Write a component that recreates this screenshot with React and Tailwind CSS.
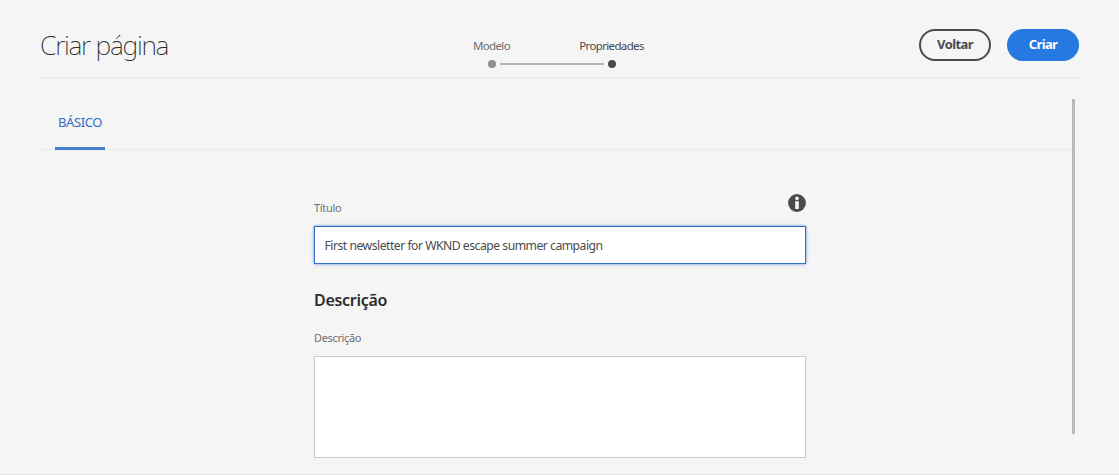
function Step({ label, active, children }) {
  return (
    <div className={`flex w-[120px] flex-col items-center ${active ? "text-[#4b4b4b]" : "text-[#6e6e6e]"}`}>
      <span className="-ml-px flex h-4 items-center whitespace-nowrap text-[11.5px] tracking-[-0.65px]">{label}</span>
      <div className="relative mt-1.5 flex w-full justify-center">
        <span className={`size-2 rounded-full ${active ? "bg-[#4b4b4b]" : "bg-[#8e8e8e]"}`} />
        {children}
      </div>
    </div>
  );
}

function Header() {
  return (
    <header className="mx-10 flex h-[79px] shrink-0 justify-between border-b-2 border-[#eaeaea]">
      <div className="w-[392px] pt-[27px]">
        <h1 className="whitespace-nowrap text-[26.5px] font-extralight leading-9 tracking-[-1.25px] text-[#2c2c2c]">
          Criar página
        </h1>
      </div>
      <div className="flex w-[240px] pt-[38px]">
        <Step label="Modelo">
          <span className="absolute left-[68px] top-[3px] h-0.5 w-[104px] bg-[#b3b3b3]" />
        </Step>
        <Step label="Propriedades" active />
      </div>
      <div className="flex w-[407px] justify-end gap-4 pt-[29px] text-[13px] font-bold tracking-[-0.6px]">
        <button className="h-8 w-[72px] rounded-full border-2 border-[#4b4b4b] text-[#4b4b4b]">Voltar</button>
        <button className="h-8 w-[72px] rounded-full bg-[#2679e0] text-white">Criar</button>
      </div>
    </header>
  );
}

function InfoIcon() {
  return (
    <svg width="18" height="18" viewBox="0 0 18 18" aria-hidden="true">
      <circle cx="9" cy="9" r="8.9" fill="#4b4b4b" />
      <circle cx="9" cy="4.4" r="1.8" fill="#f5f5f5" />
      <path d="M7.2 7.2h3.6v7.8H7.2z" fill="#f5f5f5" />
    </svg>
  );
}

export default function App() {
  return (
    <div className="flex h-[475px] w-[1119px] flex-col overflow-hidden border-b border-[#e6e6e6] bg-[#f5f5f5] font-['Noto_Sans','Open_Sans',sans-serif]">
      <Header />
      <main className="relative mx-10 flex-1">
        <nav className="flex h-[71px] items-end border-b border-[#eaeaea] pl-[15px]">
          <button className="-mb-px flex h-[41px] w-[50px] justify-center border-b-[3px] border-[#4480cf] pt-[3px] text-[13px] leading-5 tracking-[-0.4px] text-[#326ec8]">
            BÁSICO
          </button>
        </nav>
        <form className="ml-[274px] w-[492px] pt-11">
          <div className="flex h-[32px] justify-between">
            <label htmlFor="title" className="pt-[6px] text-[11px] leading-4 tracking-[-0.3px] text-[#707070]">
              Título
            </label>
            <InfoIcon />
          </div>
          <input
            id="title"
            className="block h-[38px] w-full border border-[#326ec8] bg-white px-[9.5px] pt-px text-[12.2px] tracking-[-0.5px] text-[#4b4b4b] shadow-[0_0_3px_#5c8fd8] outline-none"
            defaultValue="First newsletter for WKND escape summer campaign"
          />
          <h2 className="mt-6 text-[16px] font-semibold leading-6 tracking-[-0.3px] text-[#2c2c2c]">Descrição</h2>
          <label
            htmlFor="description"
            className="mt-[18px] block text-[11px] leading-4 tracking-[-0.35px] text-[#707070]"
          >
            Descrição
          </label>
          <textarea id="description" className="mt-[10px] block h-[102px] w-full resize-none border border-[#cacaca] bg-white outline-none" />
        </form>
        <div className="absolute left-[1032px] top-5 h-[335px] w-[3px] bg-[#b9b9b9]" />
      </main>
    </div>
  );
}
